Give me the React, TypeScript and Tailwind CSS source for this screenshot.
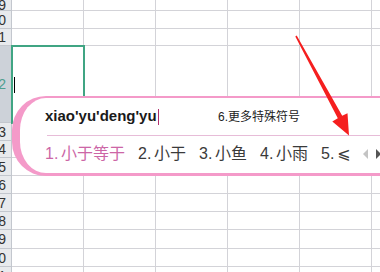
import React from 'react';

const rows = [
  {label: '9', h: 'h-[11px]'},
  {label: '10', h: 'h-[18px]'},
  {label: '11', h: 'h-[17px]'},
  {label: '12', h: 'h-[77px]', active: true},
  {label: '13', h: 'h-[18px]'},
  {label: '14', h: 'h-[17px]'},
  {label: '15', h: 'h-[18px]'},
  {label: '16', h: 'h-[18px]'},
  {label: '17', h: 'h-[18px]'},
  {label: '18', h: 'h-[18px]'},
  {label: '19', h: 'h-[19px]'},
  {label: '20', h: 'h-[18px]'},
  {label: '21', h: 'h-[18px]'},
];

const cols = [0, 1, 2, 3, 4, 5];

const candidates = [
  {num: '1.', text: '小于等于', first: true},
  {num: '2.', text: '小于'},
  {num: '3.', text: '小鱼'},
  {num: '4.', text: '小雨'},
  {num: '5.', text: '⩽'},
];

function Sheet() {
  return (
    <div className="flex flex-col">
      {rows.map((row) => (
        <div key={row.label} className={`flex ${row.h}`}>
          <div
            className={`flex w-[12px] shrink-0 items-center justify-end overflow-hidden border-r border-b border-[#c3c7ce] pr-[5px] text-[14px] leading-none ${
              row.active ? 'bg-[#cdd2d9] text-[#4f9f90]' : 'bg-[#e8eaed] text-[#333]'
            }`}
          >
            {row.label}
          </div>
          {cols.map((c) => (
            <div
              key={c}
              className="w-[72px] shrink-0 border-r border-b border-[#d3d3d8] bg-white"
            />
          ))}
        </div>
      ))}
    </div>
  );
}

function ImePopup() {
  return (
    <div className="absolute top-[96px] left-[12px] h-[80px] w-[400px] rounded-l-[34px] border-t-2 border-b-[3px] border-l-[8px] border-[#f49ac9] bg-white">
      <div className="flex h-[37px] items-center pl-[25px]">
        <div className="flex w-[173px] items-center">
          <span className="text-[15px] font-bold text-[#1a1a1a]">
            xiao'yu'deng'yu
          </span>
          <span className="ml-[1px] h-[16px] w-[1px] bg-[#b0306e]" />
        </div>
        <span className="text-[12px] text-[#222]">6.更多特殊符号</span>
      </div>
      <div className="ml-[27px] border-t border-[#e7bcd8]" />
      <div className="flex h-[36px] items-center pl-[25px] text-[16px] leading-none">
        {candidates.map((c) => (
          <span
            key={c.num}
            className={`mr-[13px] flex items-center ${
              c.first ? 'text-[#cc66a6]' : 'text-[#3a3a3a]'
            }`}
          >
            <span className="inline-block w-[16px]">{c.num}</span>
            <span>{c.text}</span>
          </span>
        ))}
        <svg width="20" height="12" viewBox="0 0 20 12" className="ml-[-1px]">
          <polygon points="6,1 1,6 6,11" fill="#c4c4c4" />
          <polygon points="14,1 19,6 14,11" fill="#555" />
        </svg>
      </div>
    </div>
  );
}

function RedArrow() {
  return (
    <svg
      className="pointer-events-none absolute top-0 left-0"
      width="380"
      height="272"
      viewBox="0 0 380 272"
    >
      <polygon
        points="295.3,36.4 296.7,35.6 342.2,115.8 347.5,113.2 349,135.5 332.3,121.6 337.8,118.2"
        fill="#f51f1f"
      />
    </svg>
  );
}

export default function App() {
  return (
    <div
      className="relative h-[272px] w-[380px] overflow-hidden bg-white"
      style={{fontFamily: '"Liberation Sans", "Noto Sans CJK SC", "DejaVu Sans", sans-serif'}}
    >
      <Sheet />
      <div className="absolute top-[45px] left-[11px] h-[79px] w-[74px] border-2 border-[#40a583]" />
      <div className="absolute top-[77px] left-[14px] h-[16px] w-[1px] bg-black" />
      <ImePopup />
      <RedArrow />
    </div>
  );
}
